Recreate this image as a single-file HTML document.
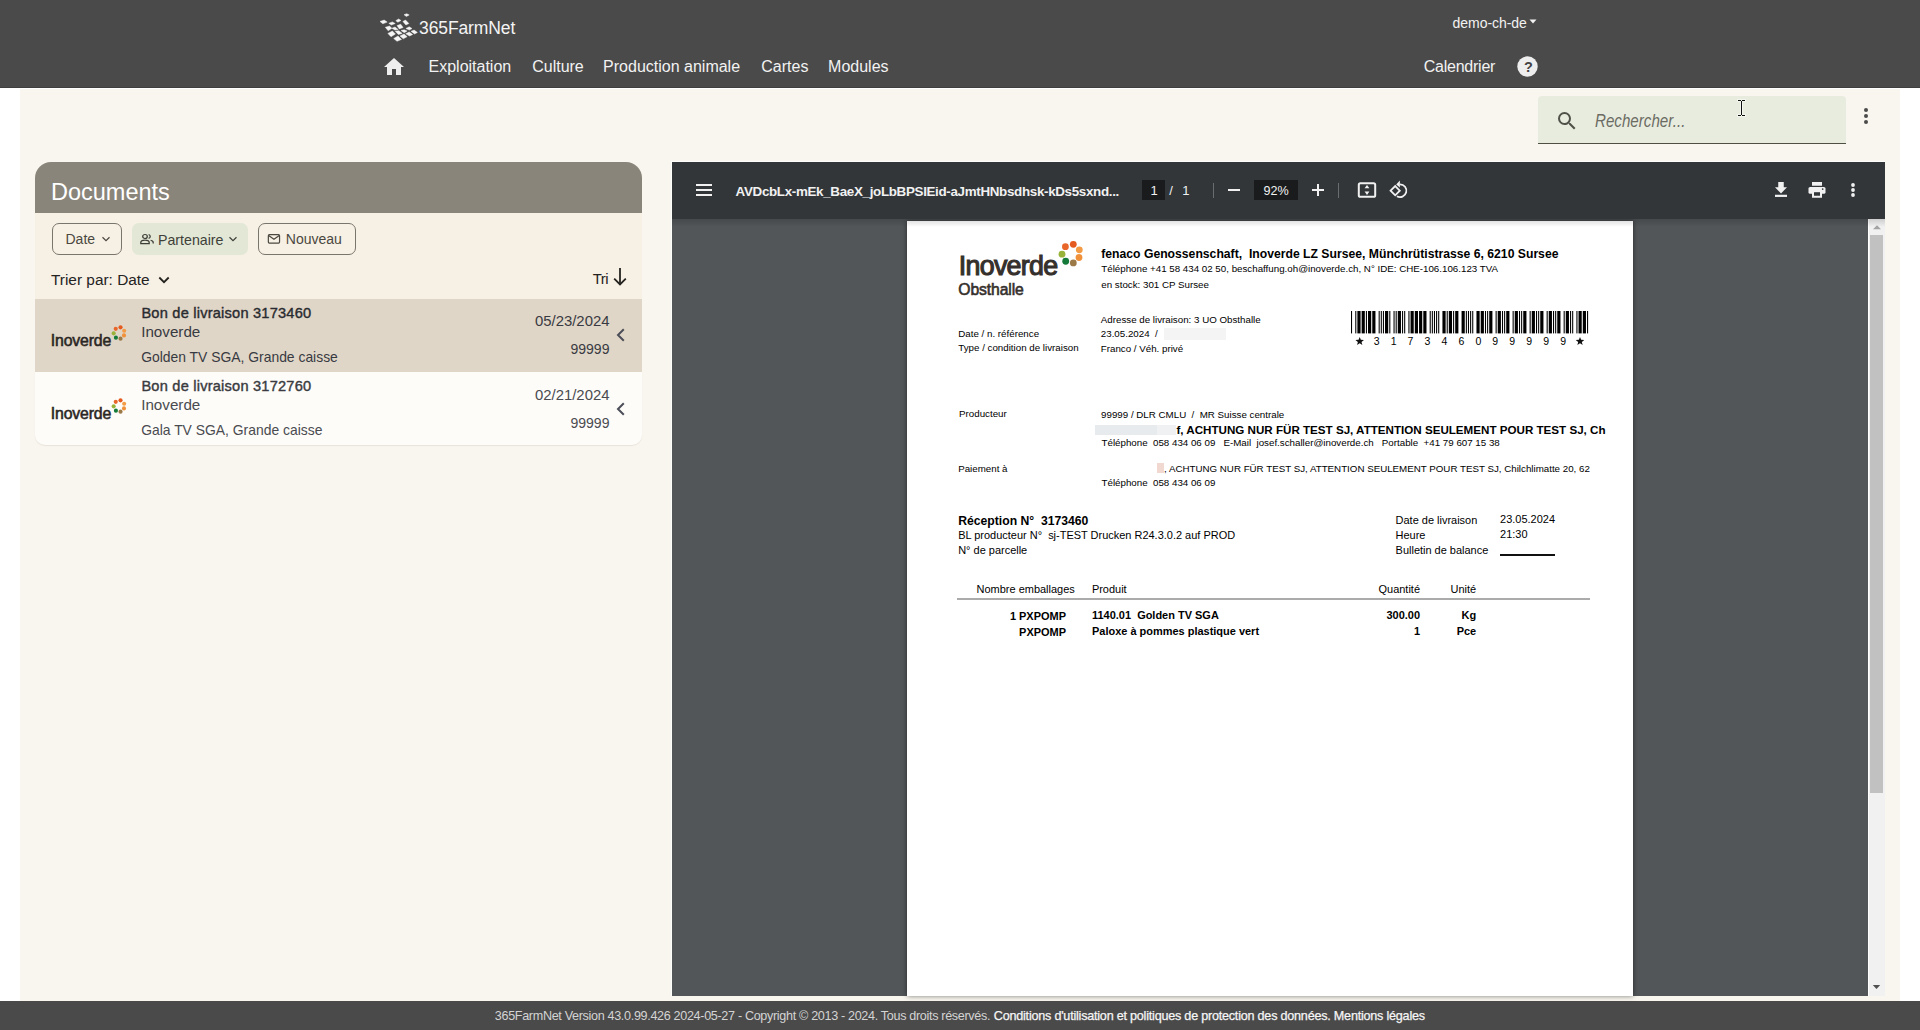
<!DOCTYPE html>
<html><head><meta charset="utf-8"><title>365FarmNet</title>
<style>
html,body{margin:0;padding:0;width:1920px;height:1030px;overflow:hidden;background:#ffffff;font-family:"Liberation Sans",sans-serif;}
.t{position:absolute;white-space:pre;line-height:1;}
.r{position:absolute;}
svg{position:absolute;overflow:visible;}
</style></head><body>

<div class="r" style="left:0px;top:0px;width:1920px;height:87px;background:#4a4a4a;"></div>
<div class="r" style="left:0px;top:87px;width:1920px;height:1px;background:#3e3e3e;"></div>
<svg style="left:376px;top:10px" width="46" height="36" viewBox="0 0 46 36"><g fill="#f6f6f6" stroke="#f6f6f6" stroke-width="0.45" stroke-linejoin="round"><polygon points="28.0,4.7 30.8,3.7 33.2,4.9 30.4,6.5"/><polygon points="4.0,11.4 8.2,10.1 11.2,12.1 6.8,13.8"/><polygon points="12.8,13.3 16.4,11.9 19.2,13.5 15.4,15.0"/><polygon points="19.8,10.7 22.6,8.9 25.0,10.5 21.9,12.2"/><polygon points="26.9,11.4 29.5,10.0 32.9,13.5 29.9,15.0"/><polygon points="9.3,17.3 13.5,16.1 15.9,18.2 12.2,20.8"/><polygon points="15.9,18.2 19.0,17.0 22.2,19.6 18.9,20.1"/><polygon points="21.0,15.6 24.7,14.2 27.1,17.5 23.3,18.9"/><polygon points="29.9,18.5 33.2,16.8 36.0,18.5 33.4,20.1"/><polygon points="11.9,23.4 16.4,21.0 19.4,24.1 15.0,26.7"/><polygon points="19.2,21.3 22.9,20.8 26.2,23.4 22.4,24.5"/><polygon points="25.0,20.5 28.1,19.8 31.1,21.0 28.3,22.7"/><polygon points="35.0,21.3 38.1,20.1 41.4,22.4 38.5,24.0"/><polygon points="29.7,23.8 33.2,22.0 36.7,24.5 33.6,26.0"/><polygon points="17.7,28.5 22.0,26.0 25.5,29.4 21.0,31.3"/><polygon points="24.0,26.0 28.0,24.1 31.1,26.7 27.3,28.8"/></g></svg>
<div class="t" style="left:419.00px;top:20px;font-size:17.5px;font-weight:400;color:#f4f4f4;font-style:normal;font-family:'Liberation Sans',sans-serif;letter-spacing:-0.1px;">365FarmNet</div>
<svg style="left:382px;top:55px" width="24" height="24" viewBox="0 0 24 24"><path fill="#eeeeee" d="M10 20v-6h4v6h5v-8h3L12 3 2 12h3v8z"/></svg>
<div class="t" style="left:428.50px;top:59px;font-size:16px;font-weight:400;color:#f2f2f2;font-style:normal;font-family:'Liberation Sans',sans-serif;">Exploitation</div>
<div class="t" style="left:532.20px;top:59px;font-size:16px;font-weight:400;color:#f2f2f2;font-style:normal;font-family:'Liberation Sans',sans-serif;">Culture</div>
<div class="t" style="left:603.10px;top:59px;font-size:16px;font-weight:400;color:#f2f2f2;font-style:normal;font-family:'Liberation Sans',sans-serif;">Production animale</div>
<div class="t" style="left:761.25px;top:59px;font-size:16px;font-weight:400;color:#f2f2f2;font-style:normal;font-family:'Liberation Sans',sans-serif;">Cartes</div>
<div class="t" style="left:828.10px;top:59px;font-size:16px;font-weight:400;color:#f2f2f2;font-style:normal;font-family:'Liberation Sans',sans-serif;">Modules</div>
<div class="t" style="left:1423.80px;top:59px;font-size:16px;font-weight:400;color:#f2f2f2;font-style:normal;font-family:'Liberation Sans',sans-serif;letter-spacing:-0.25px;">Calendrier</div>
<svg style="left:1517px;top:56px" width="21" height="21" viewBox="0 0 21 21"><circle cx="10.5" cy="10.5" r="10.2" fill="#eeeeee"/></svg>
<div class="t" style="left:1524.00px;top:60px;font-size:14.5px;font-weight:700;color:#444444;font-style:normal;font-family:'Liberation Sans',sans-serif;letter-spacing:-0.3px;">?</div>
<div class="t" style="left:1452.60px;top:16px;font-size:14px;font-weight:400;color:#f2f2f2;font-style:normal;font-family:'Liberation Sans',sans-serif;letter-spacing:-0.05px;">demo-ch-de</div>
<svg style="left:1529px;top:19px" width="8" height="5" viewBox="0 0 8 5"><path d="M0.5 0.5h7L4 4.5z" fill="#f2f2f2"/></svg>
<div class="r" style="left:20px;top:89px;width:1880px;height:912px;background:#f9f6ef;"></div>
<div class="r" style="left:0px;top:1001px;width:1920px;height:29px;background:#4a4a4a;"></div>
<div class="t" style="left:494.80px;top:1010px;font-size:12.6px;font-weight:400;color:#d4d4d4;font-style:normal;font-family:'Liberation Sans',sans-serif;letter-spacing:-0.33px;">365FarmNet Version 43.0.99.426 2024-05-27 - Copyright © 2013 - 2024. Tous droits réservés. </div>
<div class="t" style="left:993.80px;top:1010px;font-size:12.6px;font-weight:400;color:#f6f6f6;font-style:normal;font-family:'Liberation Sans',sans-serif;letter-spacing:-0.22px;-webkit-text-stroke:0.25px #f6f6f6;">Conditions d'utilisation et politiques de protection des données. Mentions légales</div>
<div class="r" style="left:1538px;top:96px;width:308px;height:48px;background:#e8ecdf;border-radius:4px 4px 0 0;"></div>
<div class="r" style="left:1538px;top:143px;width:308px;height:1px;background:#4f4f44;"></div>
<svg style="left:1555px;top:108.5px" width="24" height="24" viewBox="0 0 24 24"><path fill="#505249" d="M15.5 14h-.79l-.28-.27A6.471 6.471 0 0 0 16 9.5 6.5 6.5 0 1 0 9.5 16c1.61 0 3.09-.59 4.23-1.57l.27.28v.79l5 4.99L20.49 19l-4.99-5zm-6 0C7.01 14 5 11.99 5 9.5S7.01 5 9.5 5 14 7.01 14 9.5 11.99 14 9.5 14z"/></svg>
<div class="t" style="left:1594.50px;top:113px;font-size:17.45px;font-weight:400;color:#6b6b63;font-style:italic;font-family:'Liberation Sans',sans-serif;transform:scaleX(0.869);transform-origin:0 0;">Rechercher...</div>
<svg style="left:1736px;top:98px" width="12" height="20" viewBox="1736 98 12 20" shape-rendering="crispEdges"><g fill="#f4f8ee" opacity="0.9"><rect x="1737" y="99" width="5" height="3"/><rect x="1741" y="99" width="5" height="3"/><rect x="1740" y="101" width="3" height="15"/><rect x="1737" y="114" width="9" height="3"/></g><g fill="#111"><rect x="1738" y="100" width="3" height="1"/><rect x="1742" y="100" width="3" height="1"/><rect x="1741" y="101" width="1" height="14"/><rect x="1738" y="115" width="3" height="1"/><rect x="1742" y="115" width="3" height="1"/></g></svg>
<svg style="left:1862px;top:106px" width="8" height="20" viewBox="0 0 8 20"><g fill="#4b4b4b"><circle cx="4" cy="4" r="2"/><circle cx="4" cy="10" r="2"/><circle cx="4" cy="16" r="2"/></g></svg>
<div class="r" style="left:35px;top:162px;width:607px;height:51px;background:#8a857a;border-radius:16px 16px 0 0;"></div>
<div class="t" style="left:51.00px;top:181px;font-size:23.5px;font-weight:400;color:#ffffff;font-style:normal;font-family:'Liberation Sans',sans-serif;">Documents</div>
<div class="r" style="left:35px;top:213px;width:607px;height:86px;background:#f7f0e5;"></div>
<div class="r" style="left:52px;top:223px;width:70px;height:32px;background:transparent;box-sizing:border-box;border:1px solid #79766d;border-radius:7px;"></div>
<div class="t" style="left:65.50px;top:232px;font-size:14px;font-weight:400;color:#4a4840;font-style:normal;font-family:'Liberation Sans',sans-serif;">Date</div>
<svg style="left:101px;top:236px" width="10" height="6" viewBox="0 0 10 6"><path d="M1.5 1.2L5 4.6 8.5 1.2" stroke="#4a4840" stroke-width="1.2" fill="none"/></svg>
<div class="r" style="left:132px;top:223px;width:116px;height:32px;background:#e2e8d5;border-radius:7px;"></div>
<svg style="left:140px;top:233px" width="14" height="12.2" viewBox="0 0 14 14" preserveAspectRatio="none"><g stroke="#3f3f3a" stroke-width="1.3" fill="none"><circle cx="5" cy="4" r="2.3"/><path d="M0.8 12.2v-1.2c0-1.7 1.6-2.8 4.2-2.8s4.2 1.1 4.2 2.8v1.2z"/><path d="M8.6 1.8a2.3 2.3 0 0 1 0 4.4"/><path d="M10.6 8.4c1.5.4 2.6 1.3 2.6 2.6v1.2"/></g></svg>
<div class="t" style="left:158.00px;top:233px;font-size:14.2px;font-weight:400;color:#3f3f3a;font-style:normal;font-family:'Liberation Sans',sans-serif;">Partenaire</div>
<svg style="left:228px;top:236px" width="10" height="6" viewBox="0 0 10 6"><path d="M1.5 1.2L5 4.6 8.5 1.2" stroke="#3f3f3a" stroke-width="1.2" fill="none"/></svg>
<div class="r" style="left:258px;top:223px;width:98px;height:32px;background:transparent;box-sizing:border-box;border:1px solid #79766d;border-radius:7px;"></div>
<svg style="left:267px;top:233px" width="14" height="12" viewBox="0 0 14 12"><g stroke="#4a4840" stroke-width="1.2" fill="none"><rect x="1.35" y="1.65" width="11.2" height="8.45" rx="1"/><path d="M1.6 2.5L6.95 6.3 12.3 2.5"/></g></svg>
<div class="t" style="left:285.80px;top:232px;font-size:14px;font-weight:400;color:#4a4840;font-style:normal;font-family:'Liberation Sans',sans-serif;">Nouveau</div>
<div class="t" style="left:51.00px;top:272px;font-size:15.4px;font-weight:400;color:#24231f;font-style:normal;font-family:'Liberation Sans',sans-serif;">Trier par: Date</div>
<svg style="left:158px;top:276px" width="12" height="8" viewBox="0 0 12 8"><path d="M1.3 1.5L6 6.2 10.7 1.5" stroke="#24231f" stroke-width="1.8" fill="none"/></svg>
<div class="t" style="left:592.70px;top:271px;font-size:15px;font-weight:400;color:#24231f;font-style:normal;font-family:'Liberation Sans',sans-serif;letter-spacing:-0.55px;">Tri</div>
<svg style="left:612px;top:267px" width="16" height="19" viewBox="0 0 16 19"><g stroke="#24231f" stroke-width="1.8" fill="none"><path d="M8 1v16.5"/><path d="M2.2 11.7L8 17.5l5.8-5.8"/></g></svg>
<div class="r" style="left:35px;top:299px;width:607px;height:73px;background:#e0d6c7;"></div>
<div class="r" style="left:35px;top:372px;width:607px;height:73px;background:#fdfcf9;border-radius:0 0 10px 10px;box-shadow:0 1px 1px rgba(90,70,40,0.10);"></div>
<div class="t" style="left:50.80px;top:333px;font-size:15.8px;font-weight:400;color:#2a2623;font-style:normal;font-family:'Liberation Sans',sans-serif;letter-spacing:-0.15px;-webkit-text-stroke:0.55px #2a2623;">Inoverde</div>
<svg style="left:50.8px;top:345.7px" width="1" height="1"><circle cx="64.74" cy="-17.18" r="2.06" fill="#e8662a"/><circle cx="69.53" cy="-18.63" r="2.06" fill="#e55a1f"/><circle cx="73.17" cy="-15.30" r="2.06" fill="#f39c45"/><circle cx="62.67" cy="-12.63" r="2.06" fill="#99b33a"/><circle cx="72.99" cy="-10.62" r="2.06" fill="#f0913a"/><circle cx="64.92" cy="-8.35" r="2.06" fill="#137a3a"/><circle cx="69.53" cy="-7.34" r="2.06" fill="#9b7a48"/></svg>
<div class="t" style="left:141.40px;top:306px;font-size:14.6px;font-weight:400;color:#2a2b30;font-style:normal;font-family:'Liberation Sans',sans-serif;letter-spacing:0.22px;-webkit-text-stroke:0.4px #2a2b30;">Bon de livraison 3173460</div>
<div class="t" style="left:141.20px;top:324px;font-size:15.2px;font-weight:400;color:#383a42;font-style:normal;font-family:'Liberation Sans',sans-serif;">Inoverde</div>
<div class="t" style="left:141.20px;top:351px;font-size:13.9px;font-weight:400;color:#383a42;font-style:normal;font-family:'Liberation Sans',sans-serif;">Golden TV SGA, Grande caisse</div>
<div class="t" style="right:1310.50px;top:314px;font-size:14.9px;font-weight:400;color:#383a42;font-style:normal;font-family:'Liberation Sans',sans-serif;">05/23/2024</div>
<div class="t" style="right:1310.50px;top:342px;font-size:14.06px;font-weight:400;color:#383a42;font-style:normal;font-family:'Liberation Sans',sans-serif;">99999</div>
<svg style="left:615px;top:327px" width="12" height="16" viewBox="0 0 12 16"><path d="M8.8 2.2L3 8l5.8 5.8" stroke="#4b4e58" stroke-width="2" fill="none"/></svg>
<div class="t" style="left:50.80px;top:406px;font-size:15.8px;font-weight:400;color:#2a2623;font-style:normal;font-family:'Liberation Sans',sans-serif;letter-spacing:-0.15px;-webkit-text-stroke:0.55px #2a2623;">Inoverde</div>
<svg style="left:50.8px;top:418.7px" width="1" height="1"><circle cx="64.74" cy="-17.18" r="2.06" fill="#e8662a"/><circle cx="69.53" cy="-18.63" r="2.06" fill="#e55a1f"/><circle cx="73.17" cy="-15.30" r="2.06" fill="#f39c45"/><circle cx="62.67" cy="-12.63" r="2.06" fill="#99b33a"/><circle cx="72.99" cy="-10.62" r="2.06" fill="#f0913a"/><circle cx="64.92" cy="-8.35" r="2.06" fill="#137a3a"/><circle cx="69.53" cy="-7.34" r="2.06" fill="#9b7a48"/></svg>
<div class="t" style="left:141.40px;top:379px;font-size:14.6px;font-weight:400;color:#3a3b40;font-style:normal;font-family:'Liberation Sans',sans-serif;letter-spacing:0.22px;-webkit-text-stroke:0.4px #3a3b40;">Bon de livraison 3172760</div>
<div class="t" style="left:141.20px;top:397px;font-size:15.2px;font-weight:400;color:#4a4b50;font-style:normal;font-family:'Liberation Sans',sans-serif;">Inoverde</div>
<div class="t" style="left:141.20px;top:424px;font-size:13.9px;font-weight:400;color:#4a4b50;font-style:normal;font-family:'Liberation Sans',sans-serif;">Gala TV SGA, Grande caisse</div>
<div class="t" style="right:1310.50px;top:388px;font-size:14.9px;font-weight:400;color:#4a4b50;font-style:normal;font-family:'Liberation Sans',sans-serif;">02/21/2024</div>
<div class="t" style="right:1310.50px;top:416px;font-size:14.06px;font-weight:400;color:#4a4b50;font-style:normal;font-family:'Liberation Sans',sans-serif;">99999</div>
<svg style="left:615px;top:401px" width="12" height="16" viewBox="0 0 12 16"><path d="M8.8 2.2L3 8l5.8 5.8" stroke="#4b4e58" stroke-width="2" fill="none"/></svg>
<div class="r" style="left:671px;top:161px;width:1214px;height:835px;background:#fdfdfc;"></div>
<div class="r" style="left:672px;top:162px;width:1213px;height:834px;background:#525659;"></div>
<div class="r" style="left:672px;top:162px;width:1213px;height:57px;background:#323639;z-index:2;"></div>
<div class="r" style="left:672px;top:219px;width:1213px;height:8px;background:linear-gradient(rgba(0,0,0,0.15),rgba(0,0,0,0));z-index:2;"></div>
<svg style="left:696px;top:184px;z-index:3;" width="16" height="12" viewBox="0 0 16 12"><g fill="#f1f1f1"><rect x="0" y="0" width="16" height="2"/><rect x="0" y="5" width="16" height="2"/><rect x="0" y="10" width="16" height="2"/></g></svg>
<div class="t" style="left:735.60px;top:185px;font-size:13.4px;font-weight:700;color:#f1f1f1;font-style:normal;font-family:'Liberation Sans',sans-serif;letter-spacing:-0.33px;z-index:3;">AVDcbLx-mEk_BaeX_joLbBPSIEid-aJmtHNbsdhsk-kDs5sxnd...</div>
<div class="r" style="left:1142px;top:180px;width:23px;height:20px;background:#191b1c;z-index:3;"></div>
<div class="t" style="left:1150.50px;top:184px;font-size:13px;font-weight:400;color:#f1f1f1;font-style:normal;font-family:'Liberation Sans',sans-serif;z-index:3;">1</div>
<div class="t" style="left:1169.30px;top:184px;font-size:13px;font-weight:400;color:#f1f1f1;font-style:normal;font-family:'Liberation Sans',sans-serif;z-index:3;">/</div>
<div class="t" style="left:1182.30px;top:184px;font-size:13px;font-weight:400;color:#f1f1f1;font-style:normal;font-family:'Liberation Sans',sans-serif;z-index:3;">1</div>
<div class="r" style="left:1213px;top:183px;width:1px;height:15px;background:#6a6d70;z-index:3;"></div>
<div class="r" style="left:1228px;top:189px;width:12px;height:2px;background:#f1f1f1;z-index:3;"></div>
<div class="r" style="left:1254px;top:180px;width:44px;height:20px;background:#191b1c;z-index:3;"></div>
<div class="t" style="left:1263.50px;top:185px;font-size:12.6px;font-weight:400;color:#f1f1f1;font-style:normal;font-family:'Liberation Sans',sans-serif;z-index:3;">92%</div>
<svg style="left:1311px;top:184px;z-index:3;" width="14" height="12" viewBox="0 0 14 12"><g fill="#f1f1f1"><rect x="1" y="5" width="12" height="2"/><rect x="6" y="0" width="2" height="12"/></g></svg>
<div class="r" style="left:1338px;top:183px;width:1px;height:15px;background:#6a6d70;z-index:3;"></div>
<svg style="left:1350px;top:176px;z-index:3;" width="30" height="28" viewBox="0 0 30 28"><rect x="8.8" y="7.2" width="16.4" height="13.6" rx="1.6" fill="none" stroke="#f1f1f1" stroke-width="2"/><g fill="#f1f1f1"><path d="M14.6 12.2L17 9 19.4 12.2z"/><path d="M14.6 15.6L17 19.0 19.4 15.6z"/></g></svg>
<svg style="left:1380px;top:176px;z-index:3;" width="30" height="28" viewBox="0 0 30 28"><g fill="none" stroke="#f1f1f1" stroke-width="1.8"><path d="M10.6 14.7L15.2 10.1 19.8 14.7 15.2 19.3z"/><path d="M20 8.3A6.4 6.4 0 1 1 16.9 20.3"/></g><path d="M19.9 4.6L16.2 8.4 19.9 11.4z" fill="#f1f1f1"/></svg>
<svg style="left:1766px;top:176px;z-index:3;" width="100" height="28" viewBox="1766 176 100 28"><g fill="#f1f1f1"><path d="M1778.25 182H1783.75V187.25H1787L1781 193.4L1775 187.25H1778.25Z"/><rect x="1775" y="194.75" width="12" height="2.2"/><rect x="1812" y="182" width="10" height="3.75"/><rect x="1808.5" y="187" width="17" height="6.75" rx="1.6"/><path fill-rule="evenodd" d="M1812 192H1822V197.75H1812ZM1814 192.4V195.5H1820V192.4Z"/><circle cx="1853" cy="185" r="1.9"/><circle cx="1853" cy="190" r="1.9"/><circle cx="1853" cy="195" r="1.9"/></g><rect x="1814" y="192.2" width="6" height="3.3" fill="#323639"/><circle cx="1822.7" cy="189.1" r="0.85" fill="#323639"/></svg>
<div class="r" style="left:907px;top:221px;width:726px;height:775px;background:#ffffff;box-shadow:0 0 5px rgba(0,0,0,0.5);"></div>
<div class="r" style="left:1868px;top:218px;width:17px;height:778px;background:#f1f1f1;z-index:1;"></div>
<div class="r" style="left:1868px;top:218px;width:1px;height:778px;background:#ffffff;z-index:1;"></div>
<div class="r" style="left:1870px;top:235px;width:13px;height:558px;background:#c1c1c1;z-index:1;"></div>
<svg style="left:1872px;top:224px;z-index:1" width="10" height="6" viewBox="0 0 10 6"><path d="M1 5.2h8L5 1.2z" fill="#a3a3a3"/></svg>
<svg style="left:1872px;top:984px;z-index:1" width="10" height="6" viewBox="0 0 10 6"><path d="M0.8 1.1h7.4L4.5 5z" fill="#505050"/></svg>
<div class="t" style="left:958.75px;top:253px;font-size:26.8px;font-weight:400;color:#35302c;font-style:normal;font-family:'Liberation Sans',sans-serif;letter-spacing:-0.7px;-webkit-text-stroke:1.1px #35302c;">Inoverde</div>
<div class="t" style="left:958.30px;top:282px;font-size:15.7px;font-weight:400;color:#35302c;font-style:normal;font-family:'Liberation Sans',sans-serif;letter-spacing:-0.1px;-webkit-text-stroke:0.6px #35302c;">Obsthalle</div>
<svg style="left:900px;top:220px" width="200" height="60"><circle cx="165.40" cy="26.70" r="3.4" fill="#e8662a"/><circle cx="173.30" cy="24.30" r="3.4" fill="#e55a1f"/><circle cx="179.30" cy="29.80" r="3.4" fill="#f39c45"/><circle cx="162.00" cy="34.20" r="3.4" fill="#99b33a"/><circle cx="179.00" cy="37.50" r="3.4" fill="#f0913a"/><circle cx="165.70" cy="41.25" r="3.4" fill="#137a3a"/><circle cx="173.30" cy="42.90" r="3.4" fill="#9b7a48"/></svg>
<div class="t" style="left:1101.25px;top:248px;font-size:12.2px;font-weight:700;color:#000;font-style:normal;font-family:'Liberation Sans',sans-serif;">fenaco Genossenschaft,  Inoverde LZ Sursee, Münchrütistrasse 6, 6210 Sursee</div>
<div class="t" style="left:1101.25px;top:264px;font-size:9.76px;font-weight:400;color:#000;font-style:normal;font-family:'Liberation Sans',sans-serif;">Téléphone +41 58 434 02 50, beschaffung.oh@inoverde.ch, N° IDE: CHE-106.106.123 TVA</div>
<div class="t" style="left:1101.25px;top:280px;font-size:9.76px;font-weight:400;color:#000;font-style:normal;font-family:'Liberation Sans',sans-serif;">en stock: 301 CP Sursee</div>
<div class="t" style="left:1100.80px;top:315px;font-size:9.76px;font-weight:400;color:#000;font-style:normal;font-family:'Liberation Sans',sans-serif;">Adresse de livraison: 3 UO Obsthalle</div>
<div class="t" style="left:958.30px;top:329px;font-size:9.76px;font-weight:400;color:#000;font-style:normal;font-family:'Liberation Sans',sans-serif;">Date / n. référence</div>
<div class="t" style="left:1100.80px;top:329px;font-size:9.76px;font-weight:400;color:#000;font-style:normal;font-family:'Liberation Sans',sans-serif;">23.05.2024  /</div>
<div class="r" style="left:1164px;top:328px;width:62px;height:12px;background:#f4f4f4;"></div>
<div class="t" style="left:958.30px;top:343px;font-size:9.76px;font-weight:400;color:#000;font-style:normal;font-family:'Liberation Sans',sans-serif;">Type / condition de livraison</div>
<div class="t" style="left:1100.80px;top:344px;font-size:9.76px;font-weight:400;color:#000;font-style:normal;font-family:'Liberation Sans',sans-serif;">Franco / Véh. privé</div>
<svg style="left:1350.9px;top:311px" width="237.10" height="23"><g fill="#000"><rect x="0.000" y="0" width="1.063" height="22.4"/><rect x="4.253" y="0" width="1.063" height="22.4"/><rect x="6.379" y="0" width="3.190" height="22.4"/><rect x="10.632" y="0" width="3.190" height="22.4"/><rect x="14.885" y="0" width="1.063" height="22.4"/><rect x="17.012" y="0" width="3.190" height="22.4"/><rect x="21.265" y="0" width="3.190" height="22.4"/><rect x="27.644" y="0" width="1.063" height="22.4"/><rect x="29.770" y="0" width="1.063" height="22.4"/><rect x="31.897" y="0" width="1.063" height="22.4"/><rect x="34.023" y="0" width="3.190" height="22.4"/><rect x="38.276" y="0" width="1.063" height="22.4"/><rect x="42.529" y="0" width="1.063" height="22.4"/><rect x="44.656" y="0" width="1.063" height="22.4"/><rect x="46.782" y="0" width="3.190" height="22.4"/><rect x="51.035" y="0" width="1.063" height="22.4"/><rect x="53.161" y="0" width="1.063" height="22.4"/><rect x="57.414" y="0" width="1.063" height="22.4"/><rect x="59.541" y="0" width="3.190" height="22.4"/><rect x="63.794" y="0" width="3.190" height="22.4"/><rect x="68.047" y="0" width="3.190" height="22.4"/><rect x="72.300" y="0" width="3.190" height="22.4"/><rect x="78.679" y="0" width="1.063" height="22.4"/><rect x="80.805" y="0" width="1.063" height="22.4"/><rect x="82.932" y="0" width="1.063" height="22.4"/><rect x="85.058" y="0" width="1.063" height="22.4"/><rect x="87.185" y="0" width="1.063" height="22.4"/><rect x="91.438" y="0" width="3.190" height="22.4"/><rect x="95.691" y="0" width="1.063" height="22.4"/><rect x="97.817" y="0" width="3.190" height="22.4"/><rect x="102.070" y="0" width="1.063" height="22.4"/><rect x="104.196" y="0" width="3.190" height="22.4"/><rect x="110.576" y="0" width="3.190" height="22.4"/><rect x="114.829" y="0" width="1.063" height="22.4"/><rect x="116.955" y="0" width="1.063" height="22.4"/><rect x="119.082" y="0" width="1.063" height="22.4"/><rect x="121.208" y="0" width="1.063" height="22.4"/><rect x="125.461" y="0" width="3.190" height="22.4"/><rect x="129.714" y="0" width="3.190" height="22.4"/><rect x="133.967" y="0" width="1.063" height="22.4"/><rect x="136.093" y="0" width="1.063" height="22.4"/><rect x="138.220" y="0" width="3.190" height="22.4"/><rect x="144.599" y="0" width="1.063" height="22.4"/><rect x="146.726" y="0" width="3.190" height="22.4"/><rect x="150.978" y="0" width="1.063" height="22.4"/><rect x="153.105" y="0" width="1.063" height="22.4"/><rect x="155.231" y="0" width="3.190" height="22.4"/><rect x="161.611" y="0" width="1.063" height="22.4"/><rect x="163.737" y="0" width="3.190" height="22.4"/><rect x="167.990" y="0" width="1.063" height="22.4"/><rect x="170.117" y="0" width="1.063" height="22.4"/><rect x="172.243" y="0" width="3.190" height="22.4"/><rect x="178.622" y="0" width="1.063" height="22.4"/><rect x="180.749" y="0" width="3.190" height="22.4"/><rect x="185.002" y="0" width="1.063" height="22.4"/><rect x="187.128" y="0" width="1.063" height="22.4"/><rect x="189.255" y="0" width="3.190" height="22.4"/><rect x="195.634" y="0" width="1.063" height="22.4"/><rect x="197.761" y="0" width="3.190" height="22.4"/><rect x="202.013" y="0" width="1.063" height="22.4"/><rect x="204.140" y="0" width="1.063" height="22.4"/><rect x="206.266" y="0" width="3.190" height="22.4"/><rect x="212.646" y="0" width="1.063" height="22.4"/><rect x="214.772" y="0" width="3.190" height="22.4"/><rect x="219.025" y="0" width="1.063" height="22.4"/><rect x="221.152" y="0" width="1.063" height="22.4"/><rect x="225.404" y="0" width="1.063" height="22.4"/><rect x="227.531" y="0" width="3.190" height="22.4"/><rect x="231.784" y="0" width="3.190" height="22.4"/><rect x="236.037" y="0" width="1.063" height="22.4"/></g></svg>
<svg style="left:0;top:0" width="1" height="1"><polygon points="1359.70,336.90 1360.82,339.86 1363.98,340.01 1361.51,341.99 1362.35,345.04 1359.70,343.30 1357.05,345.04 1357.89,341.99 1355.42,340.01 1358.58,339.86" fill="#111"/></svg>
<div class="t" style="left:1376.65px;top:336px;font-size:10.5px;font-weight:400;color:#000;font-style:normal;font-family:'Liberation Sans',sans-serif;transform:translateX(-50%);">3</div>
<div class="t" style="left:1393.59px;top:336px;font-size:10.5px;font-weight:400;color:#000;font-style:normal;font-family:'Liberation Sans',sans-serif;transform:translateX(-50%);">1</div>
<div class="t" style="left:1410.54px;top:336px;font-size:10.5px;font-weight:400;color:#000;font-style:normal;font-family:'Liberation Sans',sans-serif;transform:translateX(-50%);">7</div>
<div class="t" style="left:1427.48px;top:336px;font-size:10.5px;font-weight:400;color:#000;font-style:normal;font-family:'Liberation Sans',sans-serif;transform:translateX(-50%);">3</div>
<div class="t" style="left:1444.43px;top:336px;font-size:10.5px;font-weight:400;color:#000;font-style:normal;font-family:'Liberation Sans',sans-serif;transform:translateX(-50%);">4</div>
<div class="t" style="left:1461.38px;top:336px;font-size:10.5px;font-weight:400;color:#000;font-style:normal;font-family:'Liberation Sans',sans-serif;transform:translateX(-50%);">6</div>
<div class="t" style="left:1478.32px;top:336px;font-size:10.5px;font-weight:400;color:#000;font-style:normal;font-family:'Liberation Sans',sans-serif;transform:translateX(-50%);">0</div>
<div class="t" style="left:1495.27px;top:336px;font-size:10.5px;font-weight:400;color:#000;font-style:normal;font-family:'Liberation Sans',sans-serif;transform:translateX(-50%);">9</div>
<div class="t" style="left:1512.22px;top:336px;font-size:10.5px;font-weight:400;color:#000;font-style:normal;font-family:'Liberation Sans',sans-serif;transform:translateX(-50%);">9</div>
<div class="t" style="left:1529.16px;top:336px;font-size:10.5px;font-weight:400;color:#000;font-style:normal;font-family:'Liberation Sans',sans-serif;transform:translateX(-50%);">9</div>
<div class="t" style="left:1546.11px;top:336px;font-size:10.5px;font-weight:400;color:#000;font-style:normal;font-family:'Liberation Sans',sans-serif;transform:translateX(-50%);">9</div>
<div class="t" style="left:1563.05px;top:336px;font-size:10.5px;font-weight:400;color:#000;font-style:normal;font-family:'Liberation Sans',sans-serif;transform:translateX(-50%);">9</div>
<svg style="left:0;top:0" width="1" height="1"><polygon points="1580.00,336.90 1581.12,339.86 1584.28,340.01 1581.81,341.99 1582.65,345.04 1580.00,343.30 1577.35,345.04 1578.19,341.99 1575.72,340.01 1578.88,339.86" fill="#111"/></svg>
<div class="t" style="left:959.10px;top:409px;font-size:9.76px;font-weight:400;color:#000;font-style:normal;font-family:'Liberation Sans',sans-serif;">Producteur</div>
<div class="t" style="left:1101.10px;top:410px;font-size:9.76px;font-weight:400;color:#000;font-style:normal;font-family:'Liberation Sans',sans-serif;">99999 / DLR CMLU  /  MR Suisse centrale</div>
<div class="r" style="left:1095px;top:425px;width:62px;height:10px;background:#e8ebee;"></div>
<div class="r" style="left:1157px;top:425px;width:19px;height:10px;background:#eff1f3;"></div>
<div class="t" style="left:1176.40px;top:424px;font-size:11.62px;font-weight:700;color:#000;font-style:normal;font-family:'Liberation Sans',sans-serif;">f, ACHTUNG NUR FÜR TEST SJ, ATTENTION SEULEMENT POUR TEST SJ, Ch</div>
<div class="t" style="left:1101.50px;top:438px;font-size:9.76px;font-weight:400;color:#000;font-style:normal;font-family:'Liberation Sans',sans-serif;">Téléphone  058 434 06 09   E-Mail  josef.schaller@inoverde.ch   Portable  +41 79 607 15 38</div>
<div class="t" style="left:958.20px;top:464px;font-size:9.76px;font-weight:400;color:#000;font-style:normal;font-family:'Liberation Sans',sans-serif;">Paiement à</div>
<div class="r" style="left:1157px;top:463px;width:7px;height:10px;background:#f1d9d1;"></div>
<div class="t" style="left:1164.00px;top:464px;font-size:9.76px;font-weight:400;color:#000;font-style:normal;font-family:'Liberation Sans',sans-serif;width:425.5px;overflow:hidden;">, ACHTUNG NUR FÜR TEST SJ, ATTENTION SEULEMENT POUR TEST SJ, Chilchlimatte 20, 62</div>
<div class="t" style="left:1101.50px;top:478px;font-size:9.76px;font-weight:400;color:#000;font-style:normal;font-family:'Liberation Sans',sans-serif;">Téléphone  058 434 06 09</div>
<div class="t" style="left:958.20px;top:515px;font-size:12.2px;font-weight:700;color:#000;font-style:normal;font-family:'Liberation Sans',sans-serif;">Réception N°  3173460</div>
<div class="t" style="left:958.20px;top:530px;font-size:10.98px;font-weight:400;color:#000;font-style:normal;font-family:'Liberation Sans',sans-serif;">BL producteur N°  sj-TEST Drucken R24.3.0.2 auf PROD</div>
<div class="t" style="left:958.20px;top:545px;font-size:10.98px;font-weight:400;color:#000;font-style:normal;font-family:'Liberation Sans',sans-serif;">N° de parcelle</div>
<div class="t" style="left:1395.60px;top:515px;font-size:10.98px;font-weight:400;color:#000;font-style:normal;font-family:'Liberation Sans',sans-serif;">Date de livraison</div>
<div class="t" style="left:1500.10px;top:514px;font-size:10.98px;font-weight:400;color:#000;font-style:normal;font-family:'Liberation Sans',sans-serif;">23.05.2024</div>
<div class="t" style="left:1395.60px;top:530px;font-size:10.98px;font-weight:400;color:#000;font-style:normal;font-family:'Liberation Sans',sans-serif;">Heure</div>
<div class="t" style="left:1500.10px;top:529px;font-size:10.98px;font-weight:400;color:#000;font-style:normal;font-family:'Liberation Sans',sans-serif;">21:30</div>
<div class="t" style="left:1395.60px;top:545px;font-size:10.98px;font-weight:400;color:#000;font-style:normal;font-family:'Liberation Sans',sans-serif;">Bulletin de balance</div>
<div class="r" style="left:1500px;top:554px;width:55px;height:1.5px;background:#111;"></div>
<div class="t" style="left:976.60px;top:584px;font-size:10.98px;font-weight:400;color:#000;font-style:normal;font-family:'Liberation Sans',sans-serif;">Nombre emballages</div>
<div class="t" style="left:1091.90px;top:584px;font-size:10.98px;font-weight:400;color:#000;font-style:normal;font-family:'Liberation Sans',sans-serif;">Produit</div>
<div class="t" style="right:500.00px;top:584px;font-size:10.98px;font-weight:400;color:#000;font-style:normal;font-family:'Liberation Sans',sans-serif;">Quantité</div>
<div class="t" style="right:443.80px;top:584px;font-size:10.98px;font-weight:400;color:#000;font-style:normal;font-family:'Liberation Sans',sans-serif;">Unité</div>
<div class="r" style="left:957px;top:598px;width:633px;height:2px;background:#ababab;"></div>
<div class="t" style="right:854.00px;top:611px;font-size:10.98px;font-weight:700;color:#000;font-style:normal;font-family:'Liberation Sans',sans-serif;">1 PXPOMP</div>
<div class="t" style="left:1092.00px;top:610px;font-size:10.98px;font-weight:700;color:#000;font-style:normal;font-family:'Liberation Sans',sans-serif;">1140.01  Golden TV SGA</div>
<div class="t" style="right:500.00px;top:610px;font-size:10.98px;font-weight:700;color:#000;font-style:normal;font-family:'Liberation Sans',sans-serif;">300.00</div>
<div class="t" style="right:443.80px;top:610px;font-size:10.98px;font-weight:700;color:#000;font-style:normal;font-family:'Liberation Sans',sans-serif;">Kg</div>
<div class="t" style="right:854.00px;top:627px;font-size:10.98px;font-weight:700;color:#000;font-style:normal;font-family:'Liberation Sans',sans-serif;">PXPOMP</div>
<div class="t" style="left:1092.00px;top:626px;font-size:10.98px;font-weight:700;color:#000;font-style:normal;font-family:'Liberation Sans',sans-serif;">Paloxe à pommes plastique vert</div>
<div class="t" style="right:500.00px;top:626px;font-size:10.98px;font-weight:700;color:#000;font-style:normal;font-family:'Liberation Sans',sans-serif;">1</div>
<div class="t" style="right:443.80px;top:626px;font-size:10.98px;font-weight:700;color:#000;font-style:normal;font-family:'Liberation Sans',sans-serif;">Pce</div>
</body></html>
